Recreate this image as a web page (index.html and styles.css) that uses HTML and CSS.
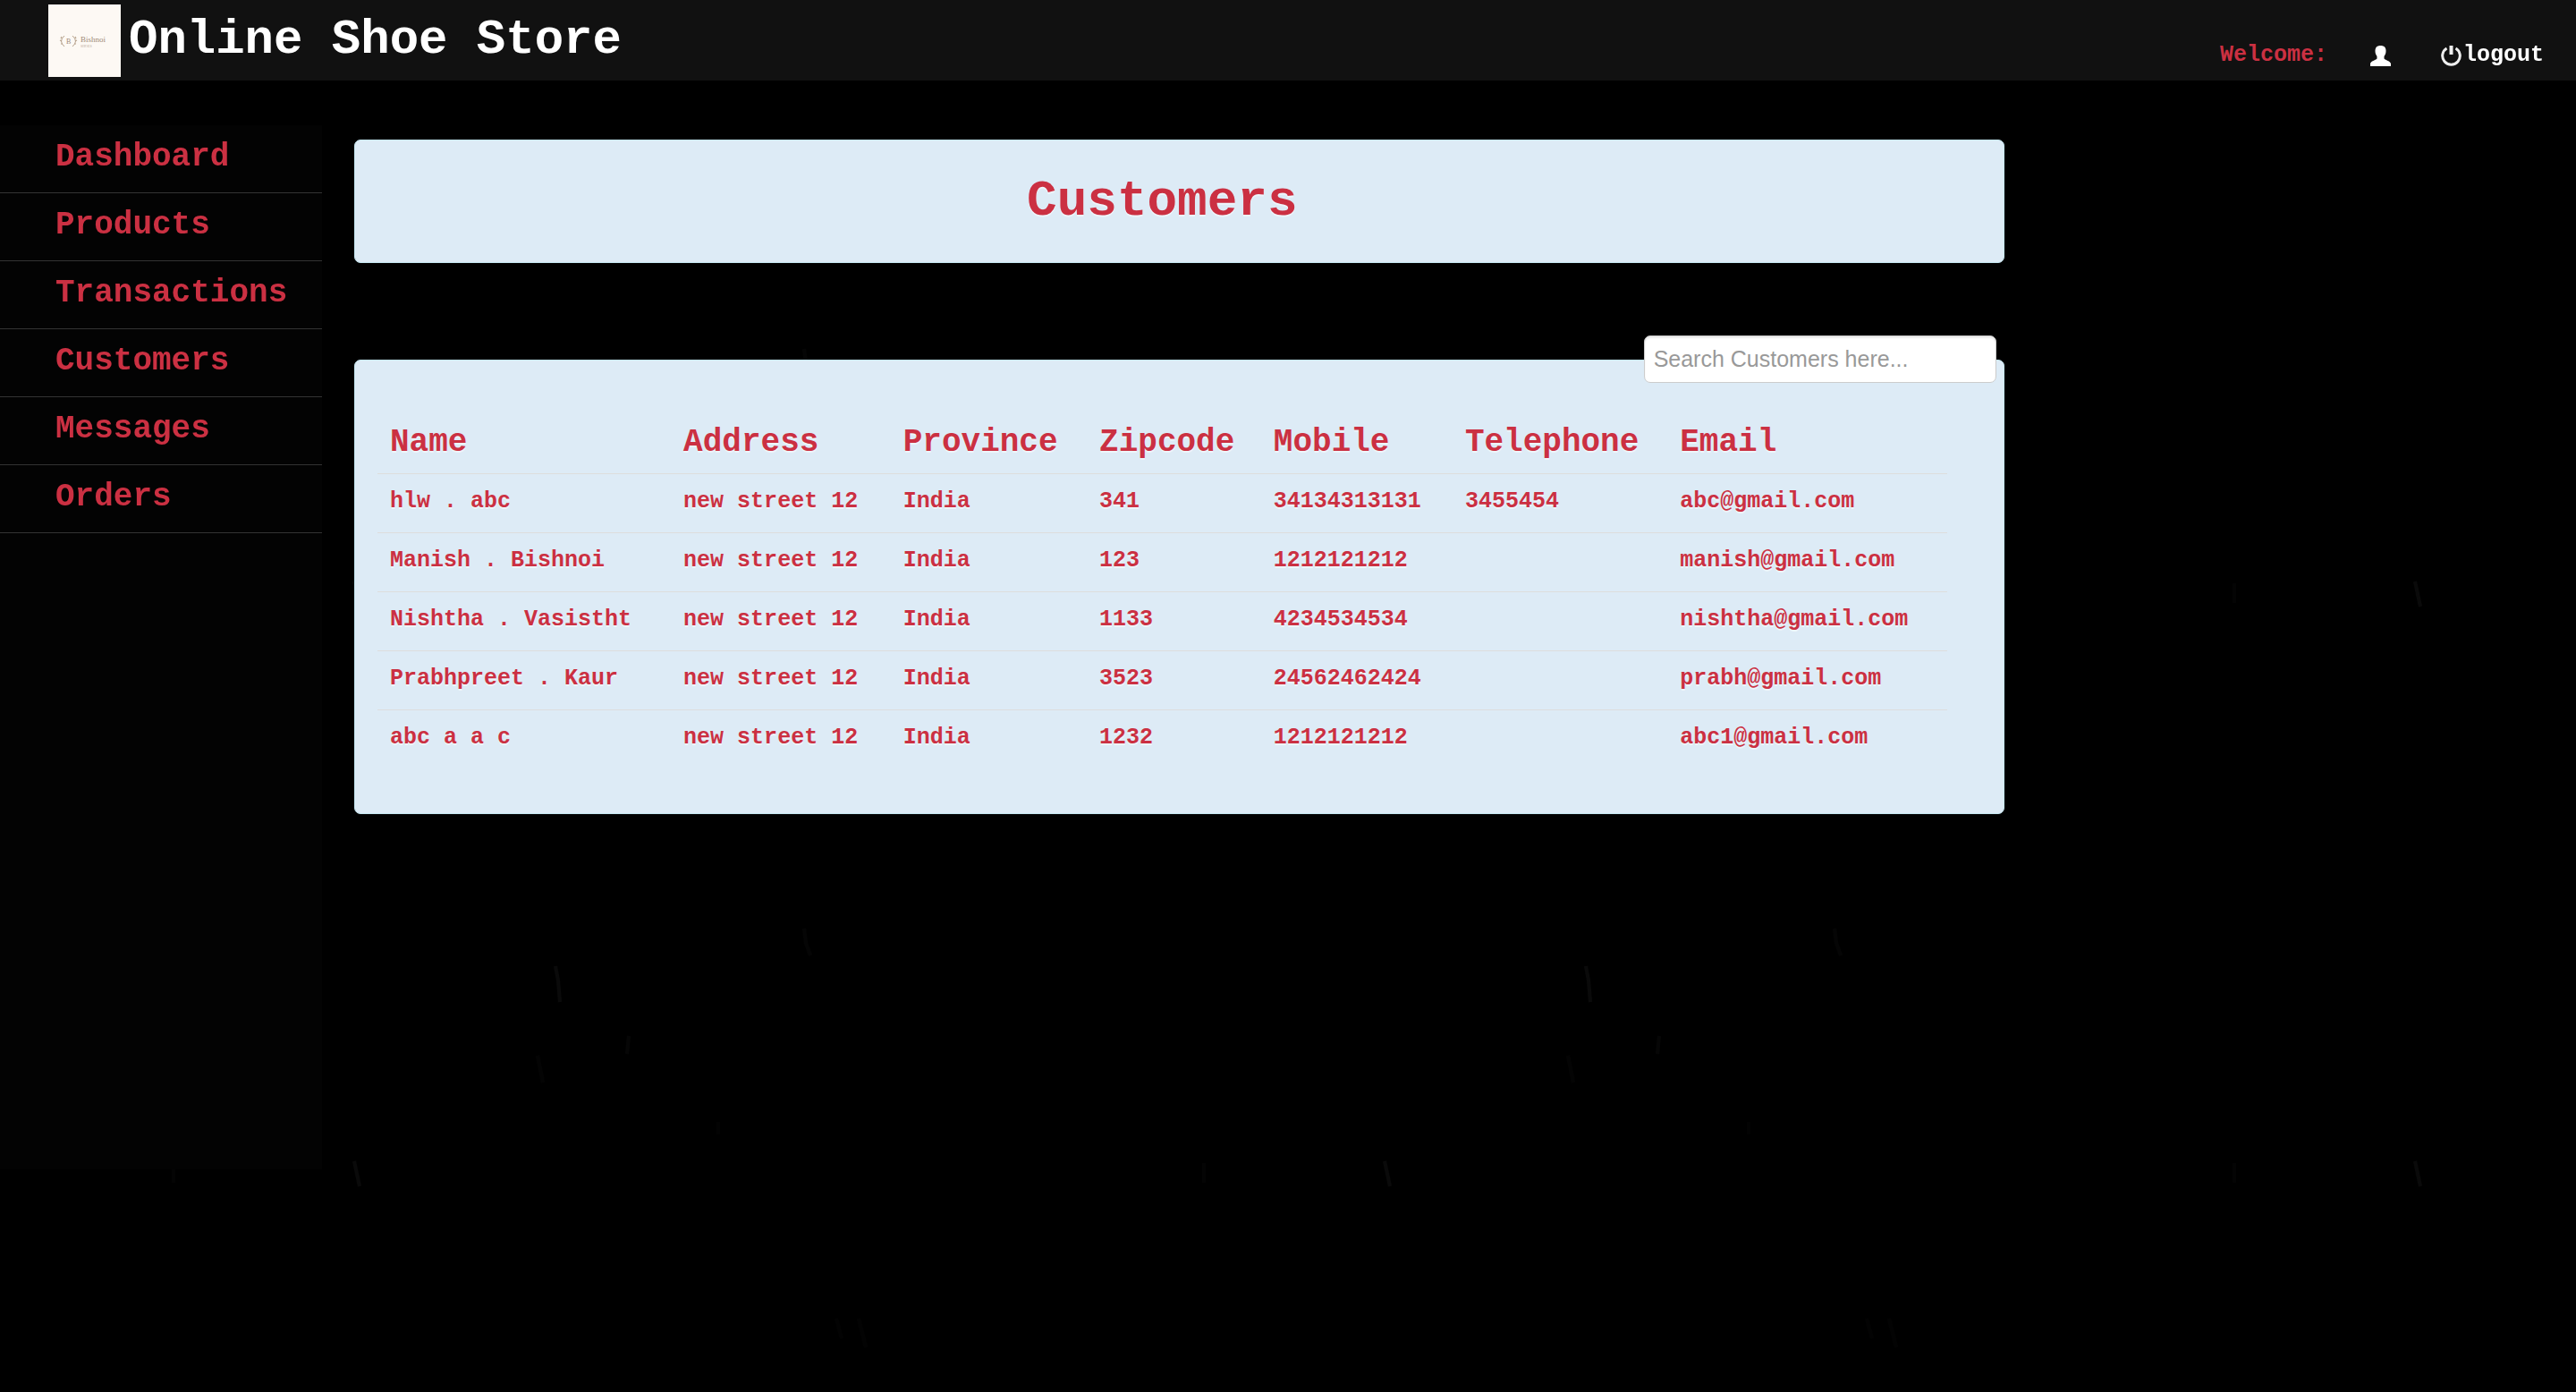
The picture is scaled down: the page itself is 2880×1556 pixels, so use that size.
FILE: index.html
```html
<!DOCTYPE html>
<html lang="en">
<head>
<meta charset="utf-8">
<title>Online Shoe Store - Customers</title>
<link rel="stylesheet" href="styles.css">
</head>
<body>
<svg class="backdrop" aria-hidden="true">
  <defs>
    <pattern id="scratches" width="1152" height="648" patternUnits="userSpaceOnUse">
      <g fill="none" stroke="#fff" stroke-width="4">
        <path d="M396 2l6 28" opacity=".04"/>
        <path d="M621 432l3 16 2 24" opacity=".04"/>
        <path d="M899 390l2 16 5 14" opacity=".02"/>
        <path d="M703 510l-2 20" opacity=".025"/>
        <path d="M601 532l6 30" opacity=".015"/>
        <path d="M194 4v22" opacity=".015"/>
        <path d="M935 178l6 22M960 178l8 32" opacity=".012"/>
        <path d="M803 606v14" opacity=".012"/>
      </g>
    </pattern>
  </defs>
  <rect width="100%" height="100%" fill="url(#scratches)"/>
</svg>

<header class="navbar">
  <a class="brand" href="#">
    <svg class="brand-logo" viewBox="0 0 81 81" aria-hidden="true">
      <rect width="81" height="81" fill="#fdf9f4"/>
      <g fill="none" stroke="#b8a48f" stroke-width="1">
        <path d="M18 35q-7 6 0 12M27 35q7 6 0 12"/>
        <path d="M15 36l-1 2M13 40l2 1M14 44l2 0M30 36l1 2M32 40l-2 1M31 44l-2 0" stroke-width="1.2"/>
      </g>
      <g fill="#a08a76" font-family="Liberation Serif, serif" font-weight="normal">
        <text x="20" y="44" font-size="8">B</text>
        <text x="36" y="42" font-size="9">Bishnoi</text>
        <text x="36" y="48" font-size="4" opacity=".7">SHOES</text>
      </g>
    </svg>
    <span class="brand-name">Online Shoe Store</span>
  </a>
  <div class="account">
    <span class="welcome">Welcome:</span>
    <svg class="icon" viewBox="0 0 23 23" aria-hidden="true">
      <path fill="#fff" d="M11.500 0C15.500 0 17.500 2 17.500 6C17.500 9 16.500 10 15.500 12V14.500C16 16 22 17 23 20V23H0V20C1 17 7 16 7.500 14.500V12C6.500 10 5.500 9 5.500 6C5.500 2 7.500 0 11.500 0Z"/>
    </svg>
    <a class="logout" href="#"><svg class="icon" viewBox="0 0 23 23" aria-hidden="true">
      <g fill="none" stroke="#eee" stroke-width="3"><path d="M6.500 3A9.800 9.800 0 1 0 16.500 3"/><path d="M11.500 0V10" stroke-width="4"/></g>
    </svg>logout</a>
  </div>
</header>

<div class="layout">
  <nav class="sidebar">
    <a href="#">Dashboard</a>
    <a href="#">Products</a>
    <a href="#">Transactions</a>
    <a href="#">Customers</a>
    <a href="#">Messages</a>
    <a href="#">Orders</a>
  </nav>

  <main class="content">
    <section class="card title-card">
      <h1>Customers</h1>
    </section>

    <section class="card table-card">
      <input class="search" type="text" placeholder="Search Customers here..." aria-label="Search customers">
      <table>
        <colgroup>
          <col class="col-name"><col class="col-address"><col class="col-province"><col class="col-zip"><col class="col-mobile"><col class="col-phone"><col>
        </colgroup>
        <thead>
          <tr><th>Name</th><th>Address</th><th>Province</th><th>Zipcode</th><th>Mobile</th><th>Telephone</th><th>Email</th></tr>
        </thead>
        <tbody>
          <tr><td>hlw . abc</td><td>new street 12</td><td>India</td><td>341</td><td>34134313131</td><td>3455454</td><td>abc@gmail.com</td></tr>
          <tr><td>Manish . Bishnoi</td><td>new street 12</td><td>India</td><td>123</td><td>1212121212</td><td></td><td>manish@gmail.com</td></tr>
          <tr><td>Nishtha . Vasistht</td><td>new street 12</td><td>India</td><td>1133</td><td>4234534534</td><td></td><td>nishtha@gmail.com</td></tr>
          <tr><td>Prabhpreet . Kaur</td><td>new street 12</td><td>India</td><td>3523</td><td>24562462424</td><td></td><td>prabh@gmail.com</td></tr>
          <tr><td>abc a a c</td><td>new street 12</td><td>India</td><td>1232</td><td>1212121212</td><td></td><td>abc1@gmail.com</td></tr>
        </tbody>
      </table>
    </section>
  </main>
</div>
</body>
</html>
```
FILE: styles.css
```css
* {
  box-sizing: border-box;
}

body {
  margin: 0;
  background: #000;
  color: #cb3042;
  font: bold 25px/36px "Courier New", "Liberation Mono", monospace;
}

a {
  color: inherit;
  text-decoration: none;
}

.backdrop {
  position: fixed;
  top: 0;
  left: 0;
  z-index: -1;
  width: 100%;
  height: 100%;
}

.navbar {
  display: flex;
  justify-content: space-between;
  height: 90px;
  padding: 0 36px 0 54px;
  background: #111;
}

.brand {
  display: flex;
  align-items: center;
  gap: 9px;
  color: #fff;
}

.brand-logo {
  width: 81px;
  height: 81px;
}

.brand-name {
  font-size: 54px;
  line-height: 60px;
}

.account {
  display: flex;
  align-items: center;
  align-self: flex-end;
  padding-bottom: 10px;
}

.icon {
  width: 23px;
  height: 23px;
}

.welcome {
  margin-right: 48px;
}

.logout {
  display: flex;
  align-items: center;
  gap: 2px;
  margin-left: 56px;
  color: #fff;
}

.layout {
  display: flex;
  align-items: flex-start;
  padding-top: 50px;
}

.sidebar {
  flex: 0 0 360px;
  min-height: 75vh;
  background: #030303;
}

.sidebar a {
  display: block;
  padding: 18px 0 21px 62px;
  border-bottom: 1px solid #333;
  font-size: 36px;
}

.content {
  flex: 1;
  padding: 16px 22.2% 50px 36px;
}

.card {
  border: 1px solid #c5e6f0;
  border-radius: 7px;
  background: #ddebf6;
  text-shadow: 0 2px 0 rgba(255, 255, 255, 0.5);
}

.title-card {
  margin-bottom: 108px;
  padding: 38px 64px 38px 26px;
}

h1 {
  margin: 0;
  font-size: 56px;
  line-height: 60px;
  text-align: center;
}

.table-card {
  position: relative;
  padding: 58px 63px 50px 25px;
}

.search {
  position: absolute;
  top: -28px;
  right: 8px;
  width: 394px;
  height: 53px;
  padding: 0 10px;
  border: 1px solid #ccc;
  border-radius: 7px;
  background: #fff;
  box-shadow: inset 0 2px 2px rgba(0, 0, 0, 0.08);
  color: #555;
  font: 25px/36px "Liberation Sans", Arial, sans-serif;
}

.search::placeholder {
  color: #999;
  opacity: 1;
}

table {
  width: 100%;
  table-layout: fixed;
  border-collapse: collapse;
}

th,
td {
  padding: 14px;
  text-align: left;
}

th {
  font-size: 36px;
  line-height: 40px;
}

td {
  padding-top: 13px;
  padding-bottom: 16px;
  border-top: 1px solid #ddd;
}

.col-name { width: 18.7%; }
.col-address { width: 14%; }
.col-province { width: 12.5%; }
.col-zip { width: 11.1%; }
.col-mobile { width: 12.2%; }
.col-phone { width: 13.7%; }
```
